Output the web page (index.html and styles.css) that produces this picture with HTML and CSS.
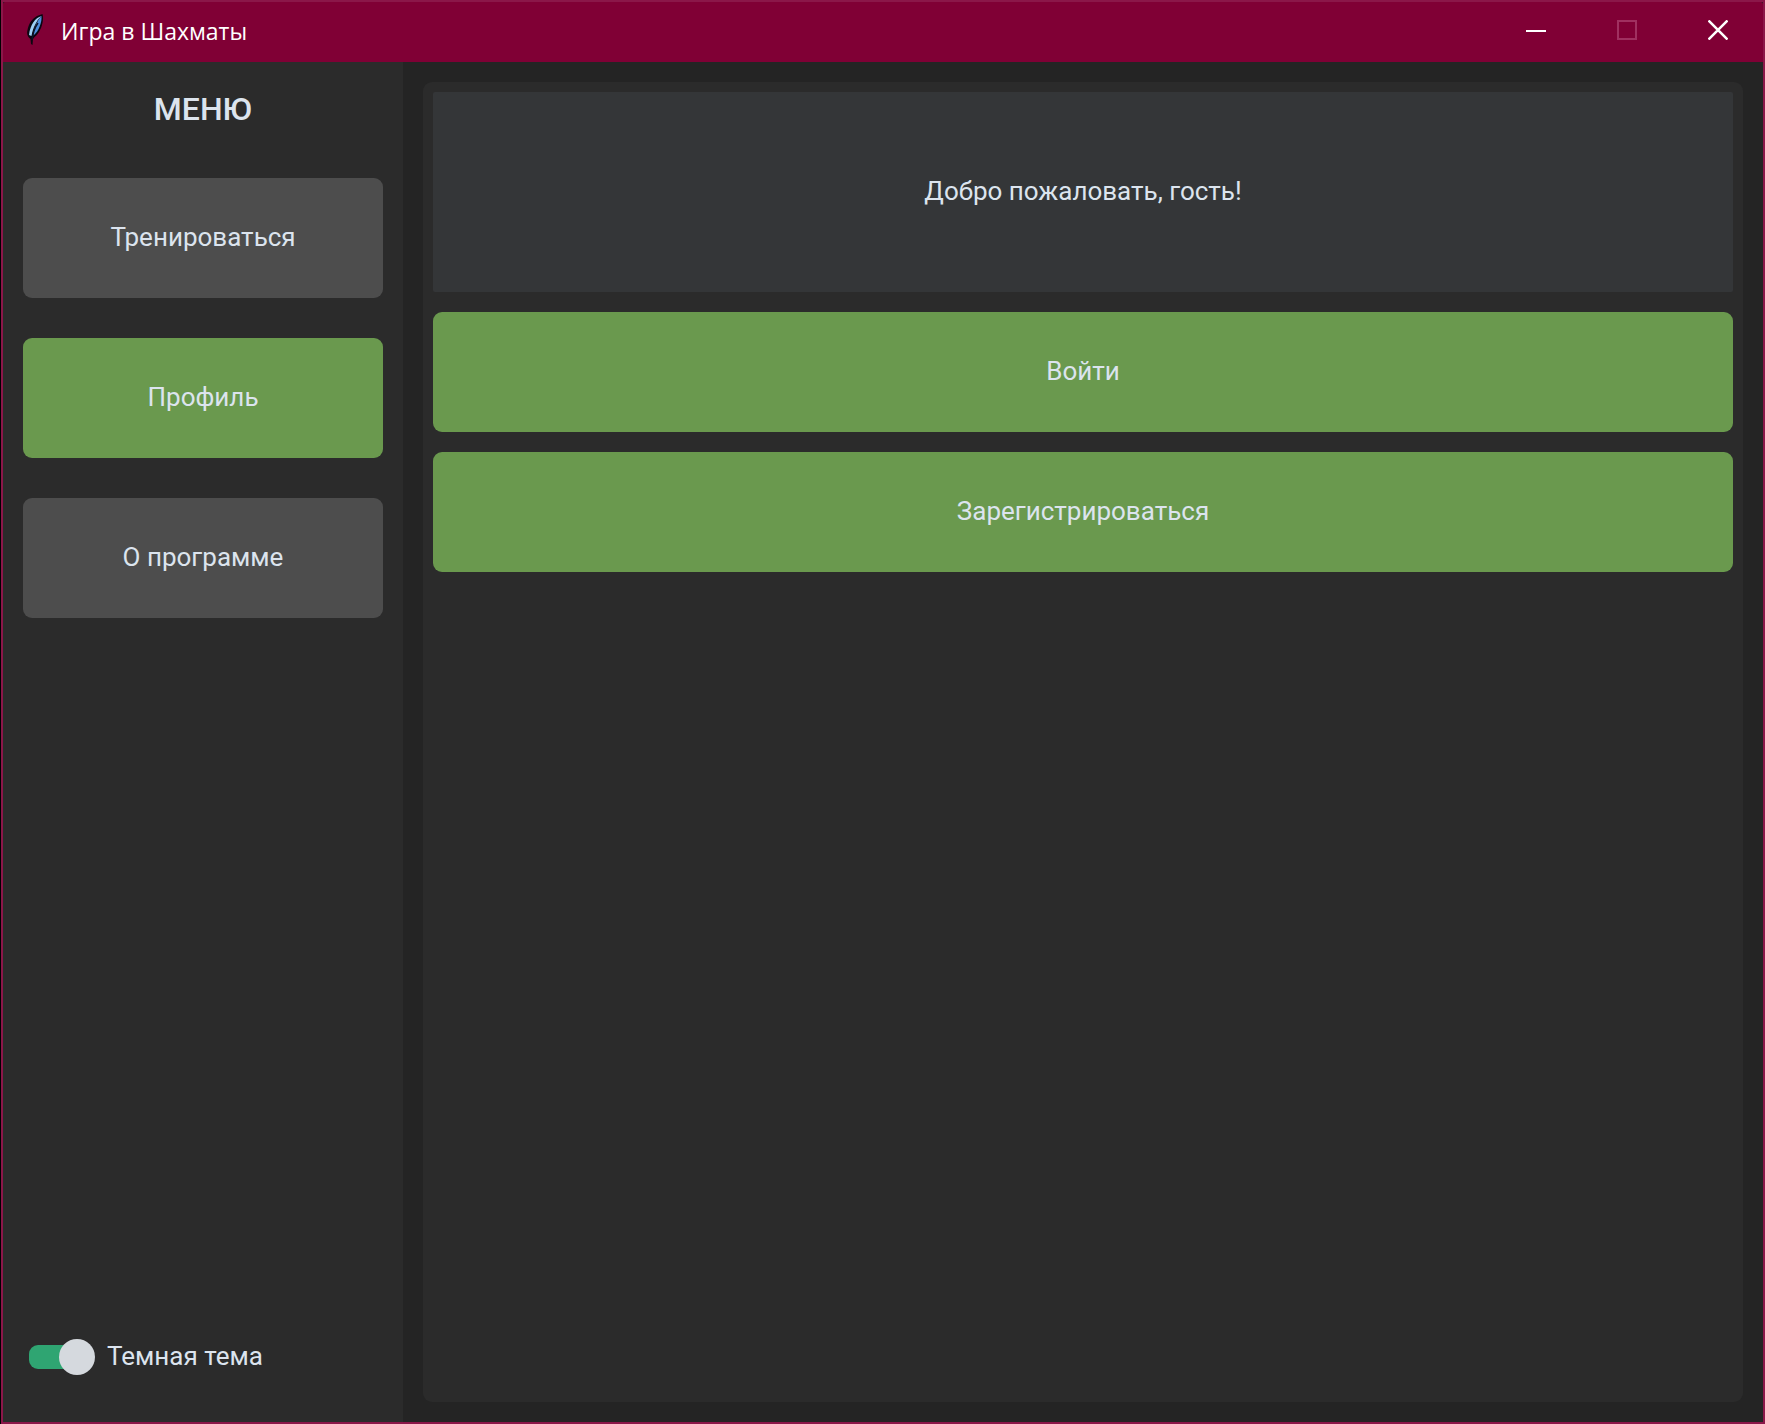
FILE: index.html
```html
<!DOCTYPE html>
<html lang="ru">
<head>
<meta charset="utf-8">
<title>Игра в Шахматы</title>
<link rel="stylesheet" href="styles.css">
</head>
<body>
<div class="window">
  <header class="titlebar">
    <svg class="app-icon" viewBox="0 0 18 32" aria-hidden="true">
      <path d="M15.500 0 C16.500 4 16 9 14 14 C12 18.500 10 21 7.500 23 L6 25 L5.500 31 L4 30 L3.500 25 C0.500 23 -0.500 20 0.500 16 C2 9 5 5 10 2 Z" fill="#0b0610"/>
      <path d="M14.500 2 C8 4 3.500 10 2 21 L4.500 22 C6 14 9 7 14.500 2Z" fill="#9ed0f5"/>
      <path d="M14.500 2 C15 8 12 17 6.500 21.500 C6.500 14 10 7 14.500 2Z" fill="#4d8fdc"/>
      <path d="M11 9 C8 13 6 18 5 26" fill="none" stroke="#0b1428" stroke-width="1.500"/>
    </svg>
    <h1 class="title">Игра в Шахматы</h1>
    <div class="controls">
      <button class="control" type="button" aria-label="Свернуть">
        <svg viewBox="0 0 20 20"><path d="M0 11H20" stroke="#fff" stroke-width="2"/></svg>
      </button>
      <button class="control" type="button" aria-label="Развернуть" disabled>
        <svg viewBox="0 0 20 20"><rect x="1" y="1" width="18" height="18" fill="none" stroke="#a03060" stroke-width="2"/></svg>
      </button>
      <button class="control" type="button" aria-label="Закрыть">
        <svg viewBox="0 0 20 20"><path d="M0.500 0.500L19.500 19.500M19.500 0.500L0.500 19.500" stroke="#fff" stroke-width="2.500"/></svg>
      </button>
    </div>
  </header>
  <div class="body">
    <aside class="sidebar">
      <h2 class="menu-title">МЕНЮ</h2>
      <nav class="menu">
        <button class="button" type="button">Тренироваться</button>
        <button class="button button-green" type="button">Профиль</button>
        <button class="button" type="button">О программе</button>
      </nav>
      <label class="theme">
        <input class="switch" type="checkbox" role="switch" checked>
        <span>Темная тема</span>
      </label>
    </aside>
    <main class="panel">
      <p class="welcome">Добро пожаловать, гость!</p>
      <button class="button button-green" type="button">Войти</button>
      <button class="button button-green" type="button">Зарегистрироваться</button>
    </main>
  </div>
</div>
</body>
</html>
```
FILE: styles.css
```css
* {
  box-sizing: border-box;
}

body {
  margin: 0;
  padding-left: 1px;
  background: #000;
  color: #dce4ee;
  font-family: Roboto, "Liberation Sans", sans-serif;
  font-size: 26px;
}

.window {
  display: flex;
  flex-direction: column;
  min-height: 100vh;
  border: 2px solid #8b1749;
  background: #242424;
}

.titlebar {
  display: flex;
  align-items: stretch;
  height: 60px;
  border-radius: 2px 2px 0 0;
  background: #800035;
}

.app-icon {
  width: 18px;
  height: 32px;
  margin: 12px 16px 0 24px;
}

.title {
  flex: 1;
  margin: 0;
  color: #fff;
  font-family: "Open Sans", "Noto Sans", sans-serif;
  font-size: 23px;
  font-weight: 400;
  line-height: 58px;
}

.controls {
  display: flex;
}

.control {
  display: flex;
  justify-content: center;
  width: 91px;
  padding: 18px 0 0;
  border: 0;
  background: none;
}

.control svg {
  width: 20px;
  height: 20px;
}

.body {
  display: flex;
  flex: 1;
}

.sidebar {
  display: flex;
  flex-direction: column;
  width: 400px;
  padding: 20px;
  background: #2b2b2b;
}

.menu-title {
  margin: 0 0 42px;
  font-size: 32px;
  font-weight: 500;
  line-height: 54px;
  text-align: center;
}

.menu {
  display: grid;
  gap: 40px;
}

.button {
  width: 100%;
  height: 120px;
  padding: 0 0 2px;
  border: 0;
  border-radius: 9px;
  background: #4d4d4d;
  color: #dce4ee;
  font: inherit;
}

.button-green {
  background: #6a994e;
}

.theme {
  display: flex;
  align-items: center;
  gap: 12px;
  margin: auto 6px 24px;
  line-height: 40px;
}

.theme span {
  padding-bottom: 2px;
}

.switch {
  position: relative;
  display: flex;
  align-items: center;
  width: 66px;
  height: 36px;
  margin: 0;
  appearance: none;
}

.switch::before {
  content: "";
  width: 60px;
  height: 24px;
  border-radius: 9px;
  background: #2fa572;
}

.switch::after {
  content: "";
  position: absolute;
  right: 0;
  width: 36px;
  height: 36px;
  border-radius: 50%;
  background: #d5d9de;
}

.panel {
  display: flex;
  flex: 1;
  flex-direction: column;
  gap: 20px;
  margin: 20px;
  padding: 10px;
  border-radius: 9px;
  background: #2b2b2b;
}

.welcome {
  display: grid;
  place-items: center;
  height: 200px;
  margin: 0;
  padding-bottom: 2px;
  border-radius: 2px;
  background: #343638;
}
```
